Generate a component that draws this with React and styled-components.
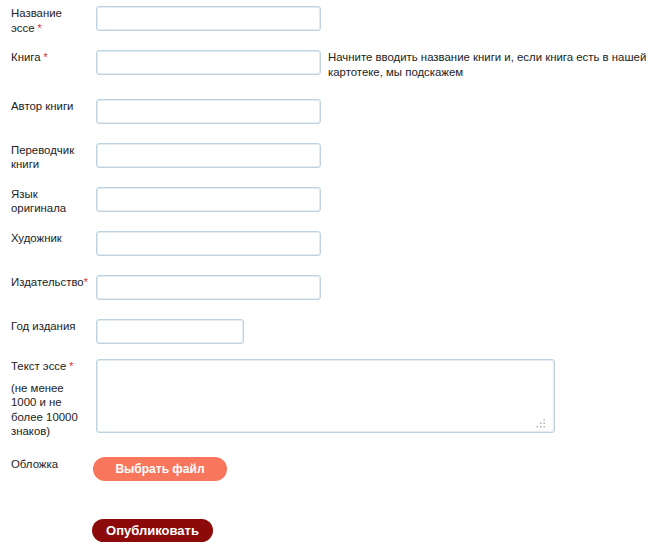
import React from 'react';
import styled, { createGlobalStyle } from 'styled-components';

const GlobalStyle = createGlobalStyle`
  body {
    margin: 0;
    background: #fff;
    font-family: "Liberation Sans", Arial, sans-serif;
    font-size: 11.4px;
    color: #222;
  }
`;

const fields = [
  { label: 'Название эссе', required: true, space: true, mb: 19 },
  { label: 'Книга', required: true, space: true, mb: 23.5, hint: true },
  { label: 'Автор книги', mb: 19 },
  { label: 'Переводчик книги', mb: 19 },
  { label: 'Язык оригинала', mb: 19 },
  { label: 'Художник', mb: 19 },
  { label: 'Издательство', required: true, mb: 19 },
  { label: 'Год издания', short: true, mb: 15 },
];

const App = () => {
  return (
    <>
      <GlobalStyle />
      <Form onSubmit={e => e.preventDefault()}>
        {fields.map(f => (
          <Row key={f.label} $mb={f.mb}>
            <Label>
              {f.label}
              {f.required && <Star>{f.space ? ' *' : '*'}</Star>}
            </Label>
            <Input type="text" $short={f.short} />
            {f.hint && (
              <Hint>
                Начните вводить название книги и, если книга есть в нашей
                <br />
                картотеке, мы подскажем
              </Hint>
            )}
          </Row>
        ))}

        <Row $h={74} $mb={24.5}>
          <Label>
            Текст эссе<Star> *</Star>
            <Note>(не менее 1000 и не более 10000 знаков)</Note>
          </Label>
          <AreaWrap>
            <TextArea />
            <Grip width="10" height="9" viewBox="0 0 10 9">
              <rect x="7.5" y="0" width="1.4" height="1.4" />
              <rect x="4" y="3.5" width="1.4" height="1.4" />
              <rect x="7.5" y="3.5" width="1.4" height="1.4" />
              <rect x="0.5" y="7" width="1.4" height="1.4" />
              <rect x="4" y="7" width="1.4" height="1.4" />
              <rect x="7.5" y="7" width="1.4" height="1.4" />
            </Grip>
          </AreaWrap>
        </Row>

        <Row $h={24} $mb={38}>
          <Label>Обложка</Label>
          <PillButton type="button" $variant="file">Выбрать файл</PillButton>
        </Row>

        <Actions>
          <PillButton type="submit" $variant="submit">Опубликовать</PillButton>
        </Actions>
      </Form>
    </>
  );
};

const Form = styled.form`
  padding: 6px 0 0 11px;
`;

const Row = styled.div`
  display: flex;
  align-items: flex-start;
  height: ${p => p.$h || 25}px;
  margin-bottom: ${p => p.$mb}px;
`;

const Label = styled.label`
  width: 78px;
  flex-shrink: 0;
  margin-right: 7px;
  line-height: 14.5px;
`;

const Star = styled.span`
  color: #e8282b;
  font-size: 10.5px;
  white-space: pre;
`;

const Note = styled.span`
  display: block;
  margin-top: 7.5px;
`;

const Input = styled.input`
  box-sizing: border-box;
  flex-shrink: 0;
  width: ${p => (p.$short ? '148px' : '225px')};
  height: 25px;
  border: 1px solid #bed2e0;
  border-radius: 3px;
  box-shadow: inset 0 0 0 1px #e2ebf2;
  background: #fff;
  padding: 2px 5px;
  font: inherit;
  outline: none;
`;

const Hint = styled.div`
  margin-left: 7px;
  line-height: 14.5px;
  white-space: nowrap;
`;

const AreaWrap = styled.div`
  position: relative;
  flex-shrink: 0;
  width: 459px;
  height: 74px;
`;

const TextArea = styled.textarea`
  box-sizing: border-box;
  display: block;
  width: 100%;
  height: 100%;
  border: 1px solid #bed2e0;
  border-radius: 3px;
  box-shadow: inset 0 0 0 1px #e2ebf2;
  resize: none;
  padding: 4px 6px;
  font: inherit;
  outline: none;
`;

const Grip = styled.svg`
  position: absolute;
  right: 9px;
  bottom: 5px;
  fill: #a7a7a7;
`;

const PillButton = styled.button`
  box-sizing: border-box;
  flex-shrink: 0;
  height: ${p => (p.$variant === 'file' ? '24px' : '23px')};
  width: ${p => (p.$variant === 'file' ? '134px' : '121px')};
  margin-left: -3px;
  border: none;
  border-radius: 12px;
  background: ${p => (p.$variant === 'file' ? '#f7765c' : '#8c0a0a')};
  color: #fff;
  font-family: "Liberation Sans", Arial, sans-serif;
  font-weight: bold;
  font-size: ${p => (p.$variant === 'file' ? '12px' : '13px')};
  cursor: pointer;
  padding: 0;
`;

const Actions = styled.div`
  padding-left: 84px;
`;

export default App;
